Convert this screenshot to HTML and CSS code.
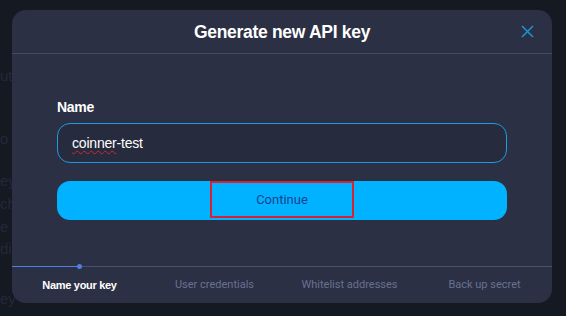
FILE: index.html
```html
<!DOCTYPE html>
<html>
<head>
<meta charset="utf-8">
<link rel="stylesheet" href="styles.css">
</head>
<body>
<div class="page">
  <div class="bg-text">
    <span class="t1">ut</span>
    <span class="t2">o</span>
    <span class="t3">ey</span>
    <span class="t4">ch</span>
    <span class="t5">e</span>
    <span class="t6">di</span>
    <span class="t7">ey</span>
  </div>
  <div class="modal">
    <div class="modal-header">
      <h1 class="title">Generate new API key</h1>
      <button class="close" aria-label="Close">
        <svg width="13" height="13" viewBox="0 0 13 13"><path d="M1 1L12 12M12 1L1 12" stroke="#1b95d8" stroke-width="1.5" fill="none"/></svg>
      </button>
    </div>
    <div class="modal-body">
      <label class="label">Name</label>
      <div class="input"><span class="spell">coinner</span>-test</div>
      <div class="btn">
        <span class="btn-text">Continue</span>
      </div>
    </div>
    <div class="steps">
      <div class="track"><div class="progress"></div><div class="dot"></div></div>
      <div class="step-labels">
        <div class="step active">Name your key</div>
        <div class="step">User credentials</div>
        <div class="step">Whitelist addresses</div>
        <div class="step">Back up secret</div>
      </div>
    </div>
  </div>
</div>
</body>
</html>
```

FILE: styles.css
```css
* { box-sizing: border-box; }
html, body { margin: 0; padding: 0; }
body {
  width: 566px;
  height: 316px;
  background: #151922;
  font-family: "Liberation Sans", Arial, sans-serif;
  overflow: hidden;
}
.page {
  position: relative;
  width: 566px;
  height: 316px;
}
.bg-text {
  position: absolute;
  left: 0;
  top: 0;
  width: 40px;
  height: 316px;
  color: #23283a;
  font-size: 15px;
}
.bg-text span { position: absolute; left: 0; }
.bg-text .t1 { top: 67px; }
.bg-text .t2 { top: 130px; }
.bg-text .t3 { top: 172px; }
.bg-text .t4 { top: 195px; }
.bg-text .t5 { top: 218px; }
.bg-text .t6 { top: 240px; }
.bg-text .t7 { top: 290px; }

.modal {
  position: absolute;
  left: 12px;
  top: 10px;
  width: 540px;
  height: 293px;
  background: #2b3044;
  border-radius: 14px;
  display: flex;
  flex-direction: column;
}
.modal-header {
  height: 44px;
  border-bottom: 1px solid #444a66;
  display: flex;
  align-items: center;
  justify-content: center;
  position: relative;
}
.title {
  margin: 0;
  color: #ffffff;
  font-size: 17.5px;
  font-weight: bold;
  letter-spacing: -0.3px;
  padding-top: 1px;
}
.close {
  position: absolute;
  right: 18px;
  top: 15px;
  background: none;
  border: 0;
  padding: 0;
  width: 13px;
  height: 13px;
  display: flex;
}
.modal-body {
  padding: 45px 45px 0 45px;
  display: flex;
  flex-direction: column;
}
.label {
  color: #ffffff;
  font-size: 14px;
  font-weight: bold;
  line-height: 16px;
  letter-spacing: -0.3px;
}
.input {
  margin-top: 8px;
  height: 40px;
  border: 1px solid #1d9be2;
  border-radius: 13px;
  background: #262b3d;
  color: #ffffff;
  font-size: 14px;
  letter-spacing: -0.2px;
  padding-left: 14px;
  padding-bottom: 1px;
  display: flex;
  align-items: center;
}
.spell {
  text-decoration: underline wavy #d02a2a;
  text-decoration-thickness: 1px;
  text-underline-offset: 2px;
}
.btn {
  margin-top: 18px;
  height: 39px;
  background: #00b2ff;
  border-radius: 13px;
  display: flex;
  justify-content: center;
  align-items: center;
}
.btn-text {
  width: 144px;
  height: 37px;
  border: 2px solid #d6232f;
  color: #1b3f8f;
  font-family: Roboto, "Liberation Sans", sans-serif;
  font-size: 13px;
  display: flex;
  align-items: center;
  justify-content: center;
  margin-top: -2px;
}
.steps {
  margin-top: auto;
  height: 37px;
}
.track {
  position: relative;
  height: 1px;
  background: #4a5070;
}
.progress {
  position: absolute;
  left: 0;
  top: 0;
  width: 67px;
  height: 1px;
  background: #4f7ee6;
}
.dot {
  position: absolute;
  left: 65px;
  top: -2px;
  width: 5px;
  height: 5px;
  border-radius: 50%;
  background: #4f7ee6;
}
.step-labels {
  display: grid;
  grid-template-columns: repeat(4, 1fr);
  padding-top: 11px;
}
.step {
  text-align: center;
  color: #6a7190;
  font-family: Roboto, "Liberation Sans", sans-serif;
  font-size: 11px;
  line-height: 14px;
}
.step.active {
  color: #ffffff;
  font-family: "Liberation Sans", Arial, sans-serif;
  font-weight: bold;
  letter-spacing: -0.3px;
}
```
